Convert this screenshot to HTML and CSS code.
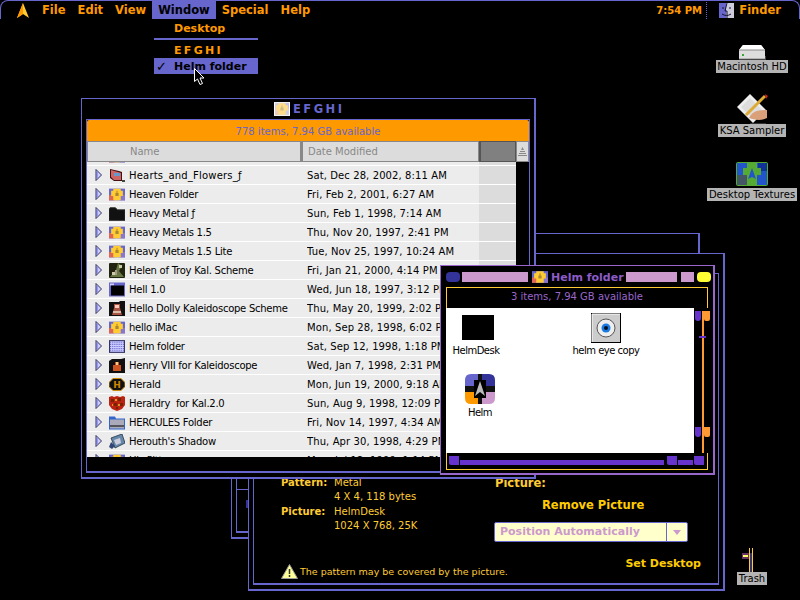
FILE: index.html
```html
<!DOCTYPE html>
<html lang="en">
<head>
<meta charset="utf-8">
<title>Finder</title>
<link rel="stylesheet" href="styles.css">
</head>
<body>
<svg class="defs" width="0" height="0" aria-hidden="true">
  <symbol id="tri" viewBox="0 0 7 12"><path d="M1 .5 6.500 6 1 11.500Z" fill="#ccf" stroke="#336"/><path d="M2 3v6" stroke="#66c"/></symbol>
  <symbol id="kal" viewBox="0 0 15 13"><rect y="1" width="15" height="11" fill="#66c"/><rect y="7" width="5" height="5" fill="#d65"/><rect x="10" y="7" width="5" height="5" fill="#87c"/><path d="M4 1h7v2h2v5h-2v4H4V8H2V3h2z" fill="#fc3"/><path d="M7 3h1v2h1v3H6V5h1z" fill="#a83"/></symbol>
  <symbol id="kalpale" viewBox="0 0 15 13"><rect width="15" height="13" fill="#fff"/><rect x="1" y="1" width="13" height="11" fill="#ccd"/><rect x="1" y="7" width="4" height="5" fill="#ecb"/><rect x="10" y="1" width="4" height="5" fill="#bbe"/><path d="M4 1h7v2h2v5h-2v4H4V8H2V3h2z" fill="#fd8"/><path d="M7 3h1v2h1v3H6V5h1z" fill="#cb8"/></symbol>
  <symbol id="hearts" viewBox="0 0 16 15"><path d="M1 1 10 3 13 4V13L5 13 1 10z" fill="#411"/><path d="M2 2 9 4 12 5V12L5 12 2 9z" fill="#c66"/><path d="M5 5h6v3H5z" fill="#69c"/><path d="M13 12h3v2h-3z" fill="#444"/></symbol>
  <symbol id="fold" viewBox="0 0 15 13"><path d="M1 1h5l2 2h7v10H0V2z" fill="#111" stroke="#333" stroke-width=".8"/></symbol>
  <symbol id="helen" viewBox="0 0 16 15"><rect width="16" height="15" rx="1" fill="#221"/><path d="M9 0l4 3-3 5 5 6H1l6-7z" fill="#674"/><path d="M10 2h3v3h-3zM3 9h3v3H3z" fill="#cca"/><path d="M6 7h2v5H6z" fill="#a98"/></symbol>
  <symbol id="hell" viewBox="0 0 16 14"><rect width="16" height="14" fill="#66c"/><rect x="1" y="1" width="4" height="2" fill="#ccf"/><rect x="2" y="3" width="13" height="10" fill="#000"/></symbol>
  <symbol id="dolly" viewBox="0 0 16 15"><path d="M0 1h10l1-1h5v15H0z" fill="#111"/><path d="M5 3h6v4l2 7H3l2-7z" fill="#a54"/><path d="M6 4h4v3H6z" fill="#fcb"/><path d="M4 10h8v2H4z" fill="#dba"/></symbol>
  <symbol id="grid" viewBox="0 0 15 12"><rect width="15" height="12" fill="#336"/><rect x="1" y="1" width="13" height="10" fill="#ccf"/><path d="M1 2h13M1 4h13M1 6h13M1 8h13M1 10h13" stroke="#66c" stroke-dasharray="1 1"/></symbol>
  <symbol id="henry" viewBox="0 0 16 15"><path d="M0 3 3 1h9l4-1v15H0z" fill="#111"/><path d="M6 4h4v3h2v6H4V7h2z" fill="#c52"/><path d="M7 4h2v3H7z" fill="#fc8"/></symbol>
  <symbol id="herald" viewBox="0 0 16 14"><path d="M4 1h8l4 4v4l-4 4H4L0 9V5z" fill="#111" stroke="#c80" stroke-width="1"/><text x="8" y="10.500" text-anchor="middle" font-family="DejaVu Sans" font-size="9" font-weight="bold" fill="#c80">H</text></symbol>
  <symbol id="shield" viewBox="0 0 16 15"><path d="M0 1 3 0l2 1 3-1 3 1 3-1 2 1v8l-3 4-5 2-5-2-3-4z" fill="#b21"/><path d="M2 3h3v3H2zM9 2h3v3H9zM5 7h3v3H5zM11 7h3v3h-3zM7 11h2v2H7z" fill="#720"/><path d="M6 3h2v2H6zM3 8h1v2H3zM9 8h2v2H9z" fill="#d92"/></symbol>
  <symbol id="herc" viewBox="0 0 16 14"><path d="M0 1h6l1 2h9v11H0z" fill="#36c"/><rect x="1" y="4" width="14" height="9" fill="#aab"/><rect x="1" y="10" width="14" height="1" fill="#000"/></symbol>
  <symbol id="shadow" viewBox="0 0 16 15"><path d="M2 4 13 0l3 9-10 5z" fill="#68a" stroke="#234" stroke-width=".8"/><path d="M5 6l6-2 1 5-5 2z" fill="#ccd"/><path d="M6 12 3 15 0 13 2 8z" fill="#347"/></symbol>
  <symbol id="finder" viewBox="0 0 15 15"><rect width="8" height="15" fill="#66c"/><rect x="7" width="8" height="15" fill="#ccd"/><path d="M8 0 6 8h2v7" fill="none" stroke="#113"/><path d="M4 4v2M11 4v2M3 11c3 2 6 2 9 0" stroke="#113" fill="none"/></symbol>
</svg>

<div class="desktop">
  <header class="menubar">
    <svg class="ship" viewBox="0 0 12 15" width="12" height="15"><path d="M6 0 12 15 6 11 0 15Z" fill="#fc3"/><path d="M6 0 0 15 6 11Z" fill="#f90"/></svg>
    <nav class="menus">
      <span class="menu">File</span>
      <span class="menu">Edit</span>
      <span class="menu">View</span>
      <span class="menu is-open">Window</span>
      <span class="menu">Special</span>
      <span class="menu">Help</span>
    </nav>
    <div class="status">
      <span class="clock">7:54 PM</span>
      <span class="dots"></span>
      <svg class="finder-icon"><use href="#finder"/></svg>
      <span class="app">Finder</span>
    </div>
  </header>

  <div class="dropdown">
    <div class="drop-item">Desktop</div>
    <div class="drop-rule"></div>
    <div class="drop-item spaced">E F G H I</div>
    <div class="drop-item is-active"><span class="check">✓</span>Helm folder</div>
  </div>

  <section class="win win-a">
    <div class="frame frame-a"><div class="a-rule"></div><div class="a-mark"></div></div>
  </section>

  <section class="win win-b">
    <div class="frame frame-b">
      <div class="b-left">
        <dl class="spec">
          <dt>Pattern:</dt><dd>Metal<br>4 X 4, 118 bytes</dd>
          <dt>Picture:</dt><dd>HelmDesk<br>1024 X 768, 25K</dd>
        </dl>
        <div class="warn">
          <svg class="warn-icon" width="17" height="15" viewBox="0 0 17 15"><path d="M8.500 .5 16.500 14.500H.5Z" fill="#ff9" stroke="#999"/><path d="M8.500 5v5M8.500 11v2" stroke="#333" stroke-width="1.500"/></svg>
          <span>The pattern may be covered by the picture.</span>
        </div>
      </div>
      <div class="b-right">
        <div class="pic-label">Picture:</div>
        <div class="remove">Remove Picture</div>
        <div class="popup"><span class="popup-text">Position Automatically</span><span class="popup-arrow"></span></div>
        <div class="set">Set Desktop</div>
      </div>
    </div>
  </section>

  <section class="win win-e">
    <div class="titlebar">
      <svg class="title-icon"><use href="#kalpale"/></svg>
      <span class="title-e">E F G H I</span>
    </div>
    <div class="frame frame-e">
      <div class="info">778 items, 7.94 GB available</div>
      <div class="cols">
        <div class="col col-name">Name</div>
        <div class="col col-date">Date Modified</div>
        <div class="col col-sort"></div>
        <div class="col col-btn"><svg width="9" height="9" viewBox="0 0 9 9"><path d="M4.500 0 6 3H3zM2 4h5v1H2zM1 6h7v1H1zM0 8h9v1H0z" fill="#888"/></svg></div>
      </div>
      <div class="listwrap">
        <div class="list">
          <div class="row"><svg class="tri"><use href="#tri"/></svg><svg class="ico"><use href="#kal"/></svg><span></span><span></span><i></i></div>
          <div class="row row-wide"><svg class="tri"><use href="#tri"/></svg><svg class="ico"><use href="#hearts"/></svg><span>Hearts_and_Flowers_ƒ</span><span>Sat, Dec 28, 2002, 8:11 AM</span><i></i></div>
          <div class="row"><svg class="tri"><use href="#tri"/></svg><svg class="ico"><use href="#kal"/></svg><span>Heaven Folder</span><span>Fri, Feb 2, 2001, 6:27 AM</span><i></i></div>
          <div class="row"><svg class="tri"><use href="#tri"/></svg><svg class="ico"><use href="#fold"/></svg><span>Heavy Metal ƒ</span><span>Sun, Feb 1, 1998, 7:14 AM</span><i></i></div>
          <div class="row"><svg class="tri"><use href="#tri"/></svg><svg class="ico"><use href="#kal"/></svg><span>Heavy Metals 1.5</span><span>Thu, Nov 20, 1997, 2:41 PM</span><i></i></div>
          <div class="row"><svg class="tri"><use href="#tri"/></svg><svg class="ico"><use href="#kal"/></svg><span>Heavy Metals 1.5 Lite</span><span>Tue, Nov 25, 1997, 10:24 AM</span><i></i></div>
          <div class="row"><svg class="tri"><use href="#tri"/></svg><svg class="ico"><use href="#helen"/></svg><span>Helen of Troy Kal. Scheme</span><span>Fri, Jan 21, 2000, 4:14 PM</span><i></i></div>
          <div class="row"><svg class="tri"><use href="#tri"/></svg><svg class="ico"><use href="#hell"/></svg><span>Hell 1.0</span><span>Wed, Jun 18, 1997, 3:12 PM</span><i></i></div>
          <div class="row"><svg class="tri"><use href="#tri"/></svg><svg class="ico"><use href="#dolly"/></svg><span>Hello Dolly Kaleidoscope Scheme</span><span>Thu, May 20, 1999, 2:02 PM</span><i></i></div>
          <div class="row"><svg class="tri"><use href="#tri"/></svg><svg class="ico"><use href="#kal"/></svg><span>hello iMac</span><span>Mon, Sep 28, 1998, 6:02 PM</span><i></i></div>
          <div class="row"><svg class="tri"><use href="#tri"/></svg><svg class="ico"><use href="#grid"/></svg><span>Helm folder</span><span>Sat, Sep 12, 1998, 1:18 PM</span><i></i></div>
          <div class="row"><svg class="tri"><use href="#tri"/></svg><svg class="ico"><use href="#henry"/></svg><span>Henry VIII for Kaleidoscope</span><span>Wed, Jan 7, 1998, 2:31 PM</span><i></i></div>
          <div class="row"><svg class="tri"><use href="#tri"/></svg><svg class="ico"><use href="#herald"/></svg><span>Herald</span><span>Mon, Jun 19, 2000, 9:18 AM</span><i></i></div>
          <div class="row"><svg class="tri"><use href="#tri"/></svg><svg class="ico"><use href="#shield"/></svg><span>Heraldry  for Kal.2.0</span><span>Sun, Aug 9, 1998, 12:09 PM</span><i></i></div>
          <div class="row"><svg class="tri"><use href="#tri"/></svg><svg class="ico"><use href="#herc"/></svg><span>HERCULES Folder</span><span>Fri, Nov 14, 1997, 4:34 AM</span><i></i></div>
          <div class="row"><svg class="tri"><use href="#tri"/></svg><svg class="ico"><use href="#shadow"/></svg><span>Herouth's Shadow</span><span>Thu, Apr 30, 1998, 4:29 PM</span><i></i></div>
          <div class="row"><svg class="tri"><use href="#tri"/></svg><svg class="ico"><use href="#kal"/></svg><span>His Pitt</span><span>Mon, Jul 12, 1999, 1:14 PM</span><i></i></div>
        </div>
      </div>
    </div>
  </section>

  <section class="win win-h">
    <div class="h-title">
      <span class="pill pill-navy"></span>
      <span class="stripe stripe-a"></span>
      <svg class="title-icon"><use href="#kal"/></svg>
      <span class="title-h">Helm folder</span>
      <span class="stripe stripe-b"></span>
      <span class="stripe stripe-c"></span>
      <span class="pill pill-yellow"></span>
    </div>
    <div class="h-frame">
      <div class="h-info">3 items, 7.94 GB available</div>
      <div class="h-body">
        <div class="canvas">
          <div class="file file-desk"><span class="black-pic"></span><span>HelmDesk</span></div>
          <div class="file file-eye">
            <svg width="30" height="30" viewBox="0 0 30 30"><rect x=".5" y=".5" width="29" height="29" fill="#ccc" stroke="#000"/><path d="M1 29V1h28" stroke="#fff" fill="none"/><circle cx="15" cy="15" r="9" fill="#eee" stroke="#555"/><circle cx="15" cy="15" r="4.500" fill="#1a7ae0"/><circle cx="15" cy="15" r="2" fill="#012"/></svg>
            <span>helm eye copy</span>
          </div>
          <div class="file file-helm">
            <svg width="30" height="30" viewBox="0 0 30 30"><path d="M6 0H15V15H0V6Q0 0 6 0Z" fill="#66c"/><path d="M15 0H24Q30 0 30 6V15H15Z" fill="#339"/><path d="M0 15H15V30H6Q0 30 0 24Z" fill="#f90"/><path d="M15 15H30V24Q30 30 24 30H15Z" fill="#c9c"/><path d="M0 12h30v6H0zM13 0h4v30h-4z" fill="#111"/><rect x="9" y="6" width="12" height="18" fill="#000"/><path d="M15 7 20 22 15 18 10 22Z" fill="#bbb"/></svg>
            <span>Helm</span>
          </div>
        </div>
        <div class="h-scroll">
          <span class="thumb thumb-top"><b></b><em></em></span>
          <span class="tick"></span>
          <span class="thumb thumb-low"><b></b><em></em></span>
        </div>
      </div>
      <div class="h-bottom">
        <span class="hb hb-cap"></span>
        <span class="hb hb-long"></span>
        <span class="hb hb-cap hb-gap"></span>
        <span class="hb hb-mid"></span>
        <span class="hb hb-cap"></span>
      </div>
    </div>
  </section>

  <div class="dicon dicon-hd">
    <svg width="28" height="15" viewBox="0 0 28 15"><path d="M5 0H23L27 5V14H1V5Z" fill="#ddd"/><path d="M5 0H23L27 5H1Z" fill="#fff"/><path d="M1 5h26" stroke="#888"/><path d="M1 14h26" stroke="#888"/><rect x="4" y="9" width="2" height="2" fill="#3a3"/><path d="M27 11h2v4h-2z" fill="#444"/></svg>
    <span>Macintosh HD</span>
  </div>
  <div class="dicon dicon-ksa">
    <svg width="32" height="31" viewBox="0 0 32 31"><path d="M1 14 14 1l16 16-13 13z" fill="#eee"/><path d="M5 14 14 5l12 12-9 9z" fill="#ddd"/><path d="M10 22 29 3" stroke="#da3" stroke-width="3"/><path d="M29 1l3 2-2 3z" fill="#c22"/><path d="M13 25c4-7 8-8 18-8v8c-6 3-12 2-18 0z" fill="#d9a07a"/><path d="M14 30h16v1H14z" fill="#333"/></svg>
    <span>KSA Sampler</span>
  </div>
  <div class="dicon dicon-tex">
    <svg class="tex-icon" width="32" height="24" viewBox="0 0 32 24"><rect x=".5" y=".5" width="31" height="23" rx="1" fill="#25c" stroke="#5a3"/><rect x="22" y="1" width="9" height="8" fill="#139"/><rect x="1" y="13" width="10" height="10" fill="#456"/><path d="M7 6h4V1h10v5h4v7H21v10H11V13H7z" fill="#5a3"/><path d="M16 6 20 17 16 15 12 17Z" fill="#25c"/></svg>
    <span>Desktop Textures</span>
  </div>
  <div class="dicon dicon-trash">
    <svg width="20" height="24" viewBox="0 0 20 24"><path d="M7.500 0v24M10.500 0v24" stroke="#fc3" fill="none"/><path d="M9 5v19" stroke="#66c"/><rect y="5" width="7" height="6" fill="#636"/><rect x="1" y="7" width="5" height="2" fill="#ff6"/></svg>
    <span>Trash</span>
  </div>

  <svg class="cursor" width="12" height="17" viewBox="0 0 12 17"><path d="M.5.5V13.500L3.500 11 6 16.500 8.500 15.500 6 10H10Z" fill="#000" stroke="#fff"/></svg>
</div>
</body>
</html>
```

FILE: styles.css
```css
* { box-sizing: border-box; }
html, body { margin: 0; height: 100%; background: #000; overflow: hidden; }
body { font-family: "DejaVu Sans", sans-serif; font-size: 10px; color: #000; }
.defs { position: absolute; }
.desktop { position: relative; width: 800px; height: 600px; background: #000; overflow: hidden; }

/* menu bar */
.menubar {
  display: flex; align-items: center; height: 19px; padding-left: 16px;
  border-top: 1px solid #66c; border-left: 1px solid #66c; border-right: 1px solid #66c;
  border-radius: 8px 8px 0 0; color: #f90; font-weight: bold; font-size: 11.500px;
}
.ship { flex: none; margin-right: 7px; }
.menus { display: flex; height: 18px; }
.menu { padding: 0 6px; line-height: 19px; }
.is-open { background: #66c; color: #000; }
.status { margin-left: auto; display: flex; align-items: center; padding-right: 18px; }
.clock { font-size: 10px; width: 50px; }
.dots { width: 1px; height: 17px; border-left: 1px dotted #66c; margin-right: 12px; }
.finder-icon { width: 15px; height: 15px; margin-right: 5px; }

/* window menu */
.dropdown { position: absolute; left: 154px; top: 20px; width: 104px; color: #f90; font-weight: bold; font-size: 11px; z-index: 5; }
.drop-item { height: 16px; line-height: 17px; padding-left: 20px; position: relative; }
.spaced { word-spacing: -1.500px; }
.drop-rule { height: 2px; background: #66c; margin: 2px 0 2px; }
.is-active { background: #66c; color: #000; }
.check { position: absolute; left: 2px; top: 0; font-size: 13px; }

/* generic windows */
.win { position: absolute; border: 1px solid #66c; border-right-width: 2px; border-bottom-width: 2px; background: #000; }
.frame { border: 1px solid #66c; border-bottom-width: 2px; background: #000; }
.win-a { left: 231px; top: 233px; width: 469px; height: 306px; padding: 19px 4px 4px; }
.frame-a { height: 100%; display: flex; flex-direction: column; }
.a-rule { height: 1px; background: #66c; margin-top: 235px; }
.a-mark { width: 3px; height: 8px; background: #339; margin: 10px 0 0 9px; }

.win-b { left: 248px; top: 253px; width: 477px; height: 338px; padding: 19px 4px 4px; }
.frame-b { height: 100%; display: flex; color: #fc3; padding: 202px 17px 4px 27px; }
.b-left { width: 214px; display: flex; flex-direction: column; }
.spec { display: grid; grid-template-columns: 53px 1fr; margin: 0; line-height: 14px; row-gap: 1px; }
.spec dt { font-weight: bold; }
.spec dd { margin: 0; }
.warn { margin-top: auto; display: flex; align-items: center; gap: 2px; font-size: 9.500px; white-space: nowrap; }
.warn-icon { flex: none; }
.b-right { flex: 1; display: flex; flex-direction: column; font-weight: bold; font-size: 11.500px; color: #fc0; }
.pic-label { height: 16px; line-height: 14px; color: #fc3; }
.remove { margin: 5px 0 0 47px; height: 16px; line-height: 16px; }
.popup { display: flex; height: 20px; width: 194px; margin: 9px 0 0 -1px; background: #ffc; border: 1px solid #66c; border-radius: 2px; color: #c9c; font-size: 11px; line-height: 18px; }
.popup-text { flex: 1; padding-left: 5px; border-right: 1px solid #66c; }
.popup-arrow { width: 20px; display: flex; align-items: center; justify-content: center; }
.popup-arrow::before { content: ""; border: 4px solid transparent; border-top: 5px solid #c9c; border-bottom: 0; }
.set { margin-top: 15px; align-self: flex-end; font-size: 11px; }

/* EFGHI */
.win-e { left: 81px; top: 98px; width: 455px; height: 381px; padding: 0 4px 4px; }
.titlebar { height: 20px; padding-bottom: 1px; display: flex; align-items: center; justify-content: center; gap: 3px; color: #66c; font-weight: bold; font-size: 11.500px; }
.title-icon { width: 16px; height: 14px; flex: none; }
.title-e { word-spacing: -1.500px; }
.frame-e { height: 354px; display: flex; flex-direction: column; }
.info { height: 21px; line-height: 23px; background: #f90; color: #66c; text-align: center; border-radius: 2px 2px 0 0; }
.cols { display: flex; height: 21px; color: #888; line-height: 19px; }
.col { border: 1px solid #888; border-left-width: 2px; background: #dcdcdc; }
.col-name { width: 214px; padding-left: 42px; border-left-width: 1px; }
.col-date { width: 178px; padding-left: 5px; }
.col-sort { width: 37px; background: #808080; border-color: #555; }
.col-btn { flex: 1; display: flex; align-items: center; justify-content: center; border-left-width: 1px; }
.listwrap { height: 295px; overflow: hidden; width: 429px; }
.list { margin-top: -15px; }
.row { display: grid; grid-template-columns: 22px 20px 178px 172px 37px; align-items: center; height: 19px; background: #ececec; border-bottom: 1px solid #fff; white-space: pre; }
.row > i { background: #dcdcdc; align-self: stretch; }
.row > span { overflow: hidden; line-height: 18px; padding-top: 1px; letter-spacing: .1px; }
.row > span:nth-of-type(1) { letter-spacing: -.25px; }
.row-wide > span:nth-of-type(1) { letter-spacing: .2px; }
.tri { width: 7px; height: 12px; margin-left: 8px; }
.ico { width: 16px; height: 15px; }

/* Helm window */
.win-h { left: 440px; top: 265px; width: 275px; height: 210px; border-color: #96c; padding: 0 5px; }
.h-title { height: 21px; padding: 6px 0 5px; display: flex; align-items: center; font-weight: bold; font-size: 11px; }
.pill { height: 10px; width: 14px; border-radius: 4px; flex: none; }
.pill-navy { background: #339; margin-right: 2px; }
.pill-yellow { background: #ff3; margin-left: 3px; }
.stripe { height: 10px; background: #c9c; flex: none; }
.stripe-a { width: 66px; margin-right: 4px; }
.title-h { width: 79px; color: #8c5cc8; padding-left: 3px; white-space: nowrap; }
.stripe-b { width: 51px; margin-right: 4px; margin-left: 2px; }
.stripe-c { width: 13px; }
.h-frame { height: 183px; width: 262px; border: 1px solid #fc3; display: flex; flex-direction: column; }
.h-info { height: 20px; line-height: 18px; text-align: center; color: #96c; }
.h-body { display: flex; height: 145px; margin: 0 -1px; }
.canvas { position: relative; width: 248px; background: #fff; color: #000; }
.file { position: absolute; display: flex; flex-direction: column; align-items: center; gap: 3px; white-space: nowrap; letter-spacing: -.5px; }
.file-desk { left: 6px; top: 7px; width: 48px; }
.black-pic { width: 32px; height: 25px; background: #000; margin: 0 0 2px 4px; }
.file-eye { left: 120px; top: 5px; width: 80px; gap: 2px; }
.file-helm { left: 18px; top: 66px; width: 32px; }
.h-scroll { position: relative; flex: 1; background: #000; }
.h-scroll::before { content: ""; position: absolute; left: 8px; top: 3px; bottom: 0; width: 2px; background: #f93; }
.thumb { position: absolute; left: 1px; display: flex; gap: 3px; }
.thumb b { width: 6px; height: 10px; background: #63c; border-radius: 0 0 3px 3px; }
.thumb em { width: 6px; height: 10px; background: #f93; border-radius: 0 0 2px 2px; }
.thumb-top { top: 3px; }
.thumb-low { top: 119px; }
.tick { position: absolute; left: 5px; top: 28px; width: 7px; height: 2px; background: #63c; }
.h-bottom { display: flex; align-items: flex-end; height: 16px; padding: 0 0 4px 2px; gap: 1px; }
.hb { background: #63c; height: 5px; }
.hb-cap { width: 10px; height: 9px; border-radius: 0 0 0 2px; }
.hb-gap { margin-left: 2px; }
.hb-long { width: 204px; }
.hb-mid { width: 15px; }

/* desktop icons */
.dicon { position: absolute; display: flex; flex-direction: column; align-items: center; }
.dicon span { background: #b4b4b4; color: #000; height: 13px; line-height: 13px; padding: 0 1.500px; white-space: nowrap; }
.dicon-hd { left: 702px; top: 45px; width: 100px; }
.dicon-ksa { left: 702px; top: 93px; width: 100px; }
.dicon-tex { left: 702px; top: 162px; width: 100px; }
.tex-icon { margin-bottom: 2px; }
.dicon-trash { left: 722px; top: 548px; width: 60px; }

.cursor { position: absolute; left: 194px; top: 68px; z-index: 9; }
```
